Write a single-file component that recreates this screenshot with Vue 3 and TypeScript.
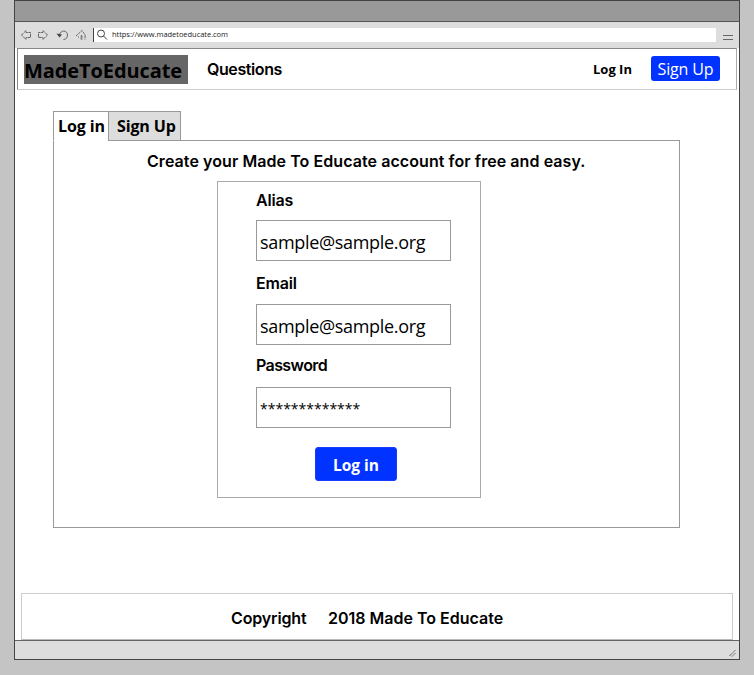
<script setup lang="ts">
import { ref } from 'vue'

interface Field {
  id: string
  label: string
  value: string
}

const activeTab = ref<'login' | 'signup'>('login')
const fields: Field[] = [
  { id: 'alias', label: 'Alias', value: 'sample@sample.org' },
  { id: 'email', label: 'Email', value: 'sample@sample.org' },
  { id: 'password', label: 'Password', value: '*************' },
]
</script>

<template>
  <div class="desktop">
    <div class="window">
      <div class="titlebar"></div>
      <div class="toolbar">
        <svg class="nav-icons" width="72" height="16" viewBox="0 0 72 16" fill="none" stroke="#666" stroke-width="1">
          <path d="M1.500 7 L6 2.500 V4.500 H10.500 V9.500 H6 V11.500 Z" stroke-dasharray="3 .6" />
          <path d="M27.500 7 L23 2.500 V4.500 H18.500 V9.500 H23 V11.500 Z" stroke-dasharray="3 .6" />
          <path d="M39.500 7 C40.500 1.500 47.500 2 47.500 7 C47.500 9.500 46 11.500 43.500 11.500" />
          <path d="M36.500 5.500 L42 6.500 L39.500 9.500 Z" fill="#444" stroke="none" />
          <path d="M56 8 L62 2.500 L65.500 7.500 M58.500 8.500 V9.500 M65 7.500 V11.500 M61.500 7 V11.500" stroke-dasharray="2.500 .7" />
          <path d="M60.500 7.500 H62.500 V11.500 H60.500 Z" fill="#888" stroke="none" />
        </svg>
        <div class="address">
          <svg width="12" height="12" viewBox="0 0 12 12" fill="none" stroke="#444">
            <circle cx="4" cy="4.500" r="3.500" />
            <path d="M6.500 7 L10 10.500" />
          </svg>
          <span class="url">https://www.madetoeducate.com</span>
        </div>
        <div class="menu"></div>
      </div>

      <header class="header">
        <div class="logo"><span>MadeToEducate</span></div>
        <a class="questions">Questions</a>
        <a class="header-login">Log In</a>
        <a class="header-signup">Sign Up</a>
      </header>

      <main class="main">
        <nav class="tabs">
          <div class="tab tab-login" :class="{ active: activeTab === 'login' }" @click="activeTab = 'login'"><span>Log in</span></div>
          <div class="tab tab-signup" :class="{ active: activeTab === 'signup' }" @click="activeTab = 'signup'"><span>Sign Up</span></div>
        </nav>
        <section class="panel">
          <div class="intro">Create your Made To Educate account for free and easy.</div>
          <form class="form" @submit.prevent>
            <div v-for="f in fields" :key="f.id" class="field" :class="f.id">
              <div class="label"><span>{{ f.label }}</span></div>
              <div class="input"><span>{{ f.value }}</span></div>
            </div>
            <button class="submit" type="submit"><span>Log in</span></button>
          </form>
        </section>
      </main>

      <footer class="footer">
        <span class="copyright">Copyright</span>
        <span class="owner">2018 Made To Educate</span>
      </footer>
      <div class="statusbar">
        <svg width="8" height="8" viewBox="0 0 8 8" fill="none" stroke="#444" stroke-dasharray="1.200 .5">
          <path d="M.5 7 L6.500 1 M3 7.500 L6.500 4" />
        </svg>
      </div>
    </div>
  </div>
</template>

<style>
body {
  margin: 0;
  background: #c4c4c4;
}
</style>

<style scoped>
* {
  box-sizing: border-box;
}
.desktop {
  height: 675px;
  padding-left: 14px;
  background: #c4c4c4;
  overflow: hidden;
  color: #000;
  font-family: 'Open Sans', 'Noto Sans', sans-serif;
  white-space: nowrap;
}
.window {
  display: flex;
  flex-direction: column;
  width: 726px;
  height: 660px;
  border: 1px solid #444;
  background: #fff;
}
.titlebar {
  flex: none;
  height: 21px;
  background: #999;
  border-bottom: 1px solid #555;
}
.toolbar {
  display: flex;
  flex: none;
  height: 26px;
  padding: 6px 6px 0 5px;
  background: #ddd;
}
.nav-icons {
  flex: none;
}
.address {
  display: flex;
  align-items: center;
  width: 623px;
  height: 14px;
  margin-left: 1px;
  padding-left: 3px;
  border-left: 1px solid #444;
  background: #fff;
}
.url {
  margin-left: 3px;
  font-size: 7.5px;
  line-height: 12px;
  height: 14px;
  letter-spacing: -0.04px;
  color: #222;
}
.menu {
  width: 10px;
  height: 5px;
  margin: 7px 0 0 7px;
  border: solid #666;
  border-width: 1px 0;
}
.header {
  display: flex;
  flex: none;
  height: 42px;
  margin: 0 2px;
  padding: 6px 0 0 6px;
  border: 1px solid #ccc;
  border-top-color: #888;
  border-left-color: #888;
  border-right-color: #aaa;
}
.logo {
  width: 164px;
  height: 29px;
  background: #666;
  font-size: 20px;
  font-weight: 700;
  line-height: 31px;
  letter-spacing: -0.1px;
}
.questions {
  width: 80px;
  margin-left: 19px;
  font: 600 16px/28px Inter, sans-serif;
  letter-spacing: -0.4px;
}
.header-login {
  width: 45px;
  margin-left: 306px;
  font-size: 13px;
  font-weight: 700;
  line-height: 28px;
}
.header-signup {
  width: 69px;
  height: 25px;
  margin: 1px 0 0 13px;
  border-radius: 3px;
  background: #0033ff;
  color: #fff;
  font-size: 16px;
  line-height: 27px;
  letter-spacing: -0.15px;
  text-align: center;
}
.main {
  width: 627px;
  margin: 21px 0 0 38px;
}
.tabs {
  display: flex;
  height: 29px;
}
.tab {
  position: relative;
  z-index: 1;
  height: 30px;
  border: 1px solid #999;
  background: #ddd;
  font-size: 16px;
  font-weight: 700;
  line-height: 29px;
  letter-spacing: -0.12px;
  cursor: pointer;
}
.tab.active {
  border-bottom-color: #fff;
  background: #fff;
}
.tab-login {
  width: 55px;
  padding-left: 4px;
  border-right: 0;
}
.tab-signup {
  width: 73px;
  padding-left: 8px;
}
.panel {
  height: 388px;
  border: 1px solid #999;
  overflow: hidden;
}
.intro {
  height: 40px;
  padding-left: 93px;
  font: 600 16px/40px Inter, sans-serif;
  letter-spacing: 0.07px;
}
.form {
  width: 264px;
  height: 317px;
  margin-left: 163px;
  padding: 0 0 0 38px;
  border: 1px solid #aaa;
}
.field {
  height: 83.5px;
}
.label {
  height: 38px;
  font: 600 16px/36px Inter, sans-serif;
  letter-spacing: -0.2px;
}
.email .label {
  line-height: 34px;
}
.password .label {
  line-height: 32px;
  letter-spacing: -0.6px;
}
.input {
  width: 195px;
  height: 41px;
  padding-left: 3px;
  border: 1px solid #999;
  font-size: 18px;
  line-height: 42px;
  letter-spacing: -0.32px;
}
.password .input {
  font-size: 14px;
  letter-spacing: 0;
}
.submit {
  display: block;
  width: 82px;
  height: 34px;
  margin: 14px 0 0 59px;
  padding: 3px 0 0;
  border: 1px solid #1a3cff;
  border-radius: 3px;
  background: #0033ff;
  color: #fff;
  font: 700 15.5px/28px 'Open Sans', sans-serif;
}
.footer {
  display: flex;
  width: 712px;
  height: 47px;
  margin: auto 0 0 6px;
  padding-left: 209px;
  border: 1px solid #ccc;
  border-bottom-color: #bbb;
  font: 600 16px/48px Inter, sans-serif;
}
.copyright {
  width: 97px;
  letter-spacing: -0.15px;
}
.statusbar {
  display: flex;
  flex: none;
  align-items: flex-end;
  justify-content: flex-end;
  height: 19px;
  padding: 0 2px 2px 0;
  border-top: 1px solid #666;
  background: #ddd;
}
</style>
